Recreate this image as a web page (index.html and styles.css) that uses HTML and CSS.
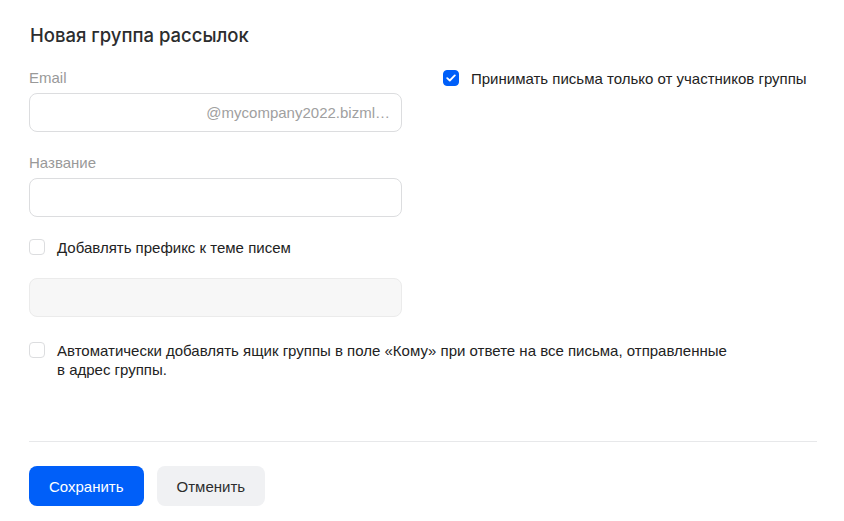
FILE: index.html
```html
<!DOCTYPE html>
<html lang="ru">
<head>
    <meta charset="UTF-8">
    <title>Новая группа рассылок</title>
    <link rel="stylesheet" href="styles.css">
</head>
<body>
    <div class="page">
        <h1 class="title">Новая группа рассылок</h1>

        <div class="columns">
            <div class="col-left">
                <div class="field">
                    <div class="label">Email</div>
                    <div class="input input-email"><span class="domain">@mycompany2022.bizml…</span></div>
                </div>

                <div class="field">
                    <div class="label">Название</div>
                    <div class="input"></div>
                </div>

                <label class="check check-prefix">
                    <span class="box"></span>
                    <span class="check-text">Добавлять префикс к теме писем</span>
                </label>

                <div class="input input-disabled"></div>
            </div>

            <div class="col-right">
                <label class="check">
                    <span class="box box-on">
                        <svg width="10" height="8" viewBox="0 0 10 8"><path d="M1.2 4.1 L3.8 6.5 L8.8 1.4" fill="none" stroke="#fff" stroke-width="1.8" stroke-linecap="round" stroke-linejoin="round"/></svg>
                    </span>
                    <span class="check-text">Принимать письма только от участников группы</span>
                </label>
            </div>
        </div>

        <label class="check check-auto">
            <span class="box"></span>
            <span class="check-text">Автоматически добавлять ящик группы в поле «Кому» при ответе на все письма, отправленные в адрес группы.</span>
        </label>

        <div class="divider"></div>

        <div class="buttons">
            <button class="button button-primary">Сохранить</button>
            <button class="button button-secondary">Отменить</button>
        </div>
    </div>
</body>
</html>
```

FILE: styles.css
```css
html {
    font-family: "Liberation Sans", Arial, sans-serif;
}

body {
    margin: 0;
    background: #ffffff;
    color: #2c2d2e;
}

.page {
    padding: 22px 27px 0 29px;
}

.title {
    margin: 0;
    font-family: Inter, "Noto Sans", sans-serif;
    font-size: 18.5px;
    font-weight: 500;
    line-height: 26px;
    color: #2c2d2e;
    padding-left: 1px;
}

.columns {
    display: flex;
    gap: 41px;
    margin-top: 20px;
}

.col-left {
    width: 373px;
}

.col-right {
    padding-top: 1px;
}

.field {
    margin-bottom: 21px;
}

.label {
    font-size: 15px;
    line-height: 20px;
    color: #999999;
    margin-bottom: 5px;
}

.input {
    box-sizing: border-box;
    height: 39px;
    border: 1px solid #dcdddf;
    border-radius: 8px;
    background: #ffffff;
}

.input-email {
    display: flex;
    align-items: center;
    justify-content: flex-end;
    padding-right: 11px;
}

.domain {
    font-size: 15px;
    color: #a0a0a0;
}

.input-disabled {
    background: #f7f7f7;
    border-color: #ebebeb;
}

.check {
    display: flex;
    align-items: flex-start;
    font-size: 15px;
    line-height: 19px;
    color: #222222;
}

.box {
    flex: none;
    box-sizing: border-box;
    width: 16px;
    height: 16px;
    margin-top: 1px;
    margin-right: 12px;
    border: 1px solid #dcdddf;
    border-radius: 4px;
    background: #ffffff;
    display: flex;
    align-items: center;
    justify-content: center;
}

.box-on {
    background: #005ff9;
    border-color: #005ff9;
}

.check-prefix {
    margin-top: 5px;
    margin-bottom: 21px;
}

.check-auto {
    margin-top: 24px;
    width: 700px;
}

.divider {
    height: 1px;
    background: #e7e8ea;
    margin-top: 62px;
}

.buttons {
    display: flex;
    gap: 13px;
    margin-top: 24px;
}

.button {
    height: 40px;
    border: none;
    border-radius: 8px;
    font-family: "Liberation Sans", Arial, sans-serif;
    font-size: 15px;
    padding: 0 20px;
    cursor: pointer;
}

.button-primary {
    background: #005ff9;
    color: #ffffff;
}

.button-secondary {
    background: #f0f1f3;
    color: #2c2d2e;
}
```
